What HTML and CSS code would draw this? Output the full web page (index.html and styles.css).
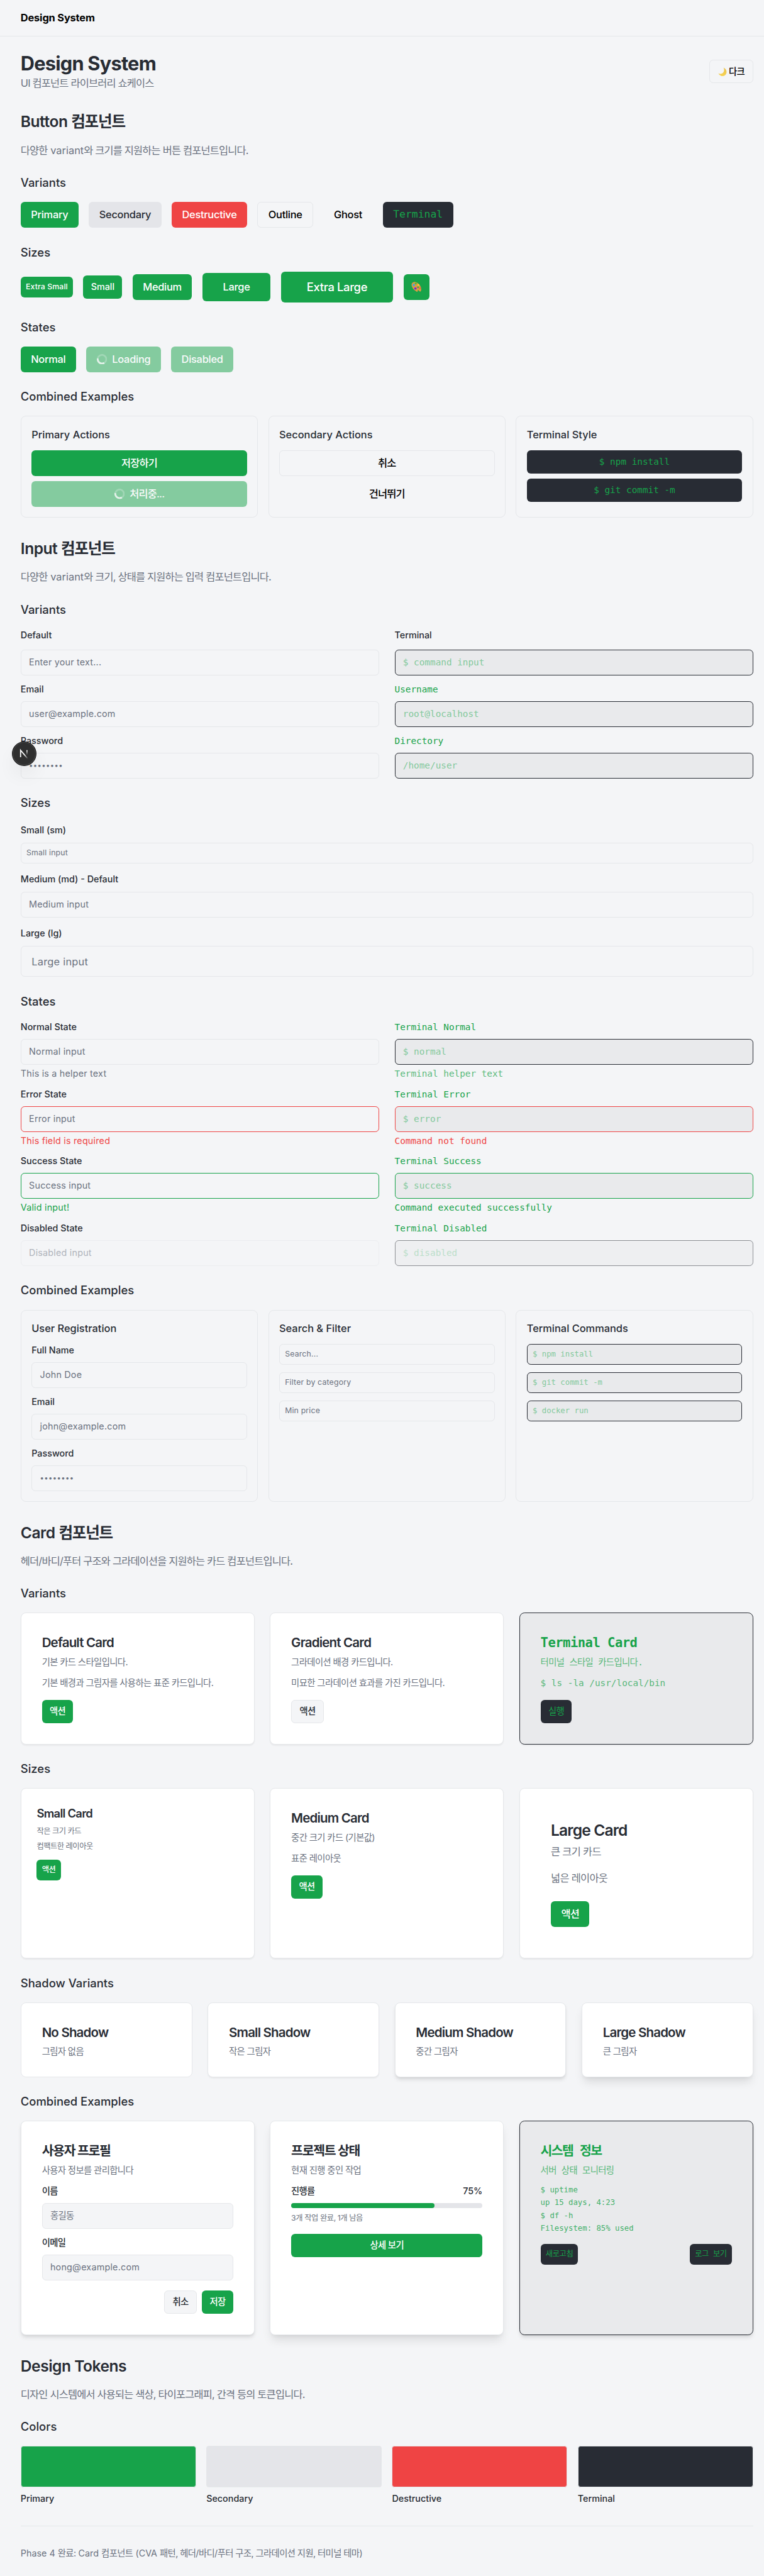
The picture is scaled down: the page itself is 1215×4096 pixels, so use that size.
FILE: index.html
```html
<!DOCTYPE html>
<html lang="ko">
<head>
<meta charset="utf-8">
<title>Design System</title>
<link rel="stylesheet" href="styles.css">
</head>
<body>
<svg width="0" height="0" class="defs" aria-hidden="true">
  <symbol id="spinner" viewBox="0 0 24 24">
    <g transform="rotate(-80 12 12)">
      <circle cx="12" cy="12" r="10" fill="none" stroke="currentColor" stroke-width="4" opacity=".25"/>
      <path fill="currentColor" opacity=".75" d="M4 12a8 8 0 018-8V0C5.373 0 0 5.373 0 12h4zm2 5.291A7.962 7.962 0 014 12H0c0 3.042 1.135 5.824 3 7.938l3-2.647z"/>
    </g>
  </symbol>
</svg>

<header class="topbar">Design System</header>

<main class="page">
  <div class="page-head">
    <div>
      <h1>Design System</h1>
      <p class="lead ko">UI 컴포넌트 라이브러리 쇼케이스</p>
    </div>
    <div class="btn sm outline theme">
      <svg width="14" height="14" viewBox="0 0 16 16"><defs><linearGradient id="moon" x1="0" y1="0" x2="0" y2="1"><stop offset="0" stop-color="#e9c14a"/><stop offset="1" stop-color="#f7d354"/></linearGradient></defs><path d="M9.6.6c4 1.500 6.200 5.600 5.200 9.600-1.100 4.200-5.400 6.300-9.400 5C3 14.400 1.300 12.700.6 10.700c2.800 1.500 6 1.200 8.100-.9C11 7.500 11.300 3.600 9.600.6z" fill="url(#moon)"/></svg>
      <span class="ko">다크</span>
    </div>
  </div>

  <section>
    <h2>Button <span class="ko">컴포넌트</span></h2>
    <p class="desc"><span class="ko">다양한</span> variant<span class="ko">와 크기를 지원하는 버튼 컴포넌트입니다.</span></p>

    <h3>Variants</h3>
    <div class="row">
      <div class="btn primary">Primary</div>
      <div class="btn secondary">Secondary</div>
      <div class="btn destructive">Destructive</div>
      <div class="btn outline">Outline</div>
      <div class="btn ghost">Ghost</div>
      <div class="btn terminal">Terminal</div>
    </div>

    <h3>Sizes</h3>
    <div class="row">
      <div class="btn xs primary">Extra Small</div>
      <div class="btn sm primary">Small</div>
      <div class="btn primary">Medium</div>
      <div class="btn lg primary">Large</div>
      <div class="btn xl primary">Extra Large</div>
      <div class="btn icon primary">
        <svg width="16" height="16" viewBox="0 0 32 32"><path fill="#d89a45" d="M8 1C13-1 22 4 27 11c4 6 5 12 3 18-1 3-4 1-6-1-2-3-4-3-4 0 0 3-1 4-4 2C9 27 1 18 1 9c0-4 3-7 7-8z"/><circle cx="21" cy="17" r="2.300" fill="#17a34a"/><ellipse cx="8" cy="10" rx="3" ry="3.800" fill="#35a7e8"/><ellipse cx="14" cy="5.500" rx="3.200" ry="2.800" fill="#45c626"/><ellipse cx="22.500" cy="10" rx="3" ry="2.600" fill="#f4cf2e"/><ellipse cx="27" cy="20" rx="2.400" ry="3" fill="#ee5a4e"/><ellipse cx="13" cy="21" rx="3.800" ry="3.300" fill="#7d22d3"/></svg>
      </div>
    </div>

    <h3>States</h3>
    <div class="row">
      <div class="btn primary">Normal</div>
      <div class="btn primary disabled"><svg class="spin"><use href="#spinner"/></svg>Loading</div>
      <div class="btn primary disabled">Disabled</div>
    </div>

    <h3>Combined Examples</h3>
    <div class="grid3 tight">
      <div class="panel">
        <h4>Primary Actions</h4>
        <div class="stack8">
          <div class="btn primary ko">저장하기</div>
          <div class="btn primary disabled ko"><svg class="spin"><use href="#spinner"/></svg>처리중...</div>
        </div>
      </div>
      <div class="panel">
        <h4>Secondary Actions</h4>
        <div class="stack8">
          <div class="btn outline ko">취소</div>
          <div class="btn ghost ko">건너뛰기</div>
        </div>
      </div>
      <div class="panel">
        <h4>Terminal Style</h4>
        <div class="stack8">
          <div class="btn sm terminal">$ npm install</div>
          <div class="btn sm terminal">$ git commit -m</div>
        </div>
      </div>
    </div>
  </section>

  <section>
    <h2>Input <span class="ko">컴포넌트</span></h2>
    <p class="desc"><span class="ko">다양한</span> variant<span class="ko">와 크기, 상태를 지원하는 입력 컴포넌트입니다.</span></p>

    <h3>Variants</h3>
    <div class="grid2">
      <div class="stack12">
        <div class="label">Default</div>
        <div class="input">Enter your text...</div>
        <div class="field"><div class="label">Email</div><div class="input">user@example.com</div></div>
        <div class="field anchor">
          <div class="label">Password</div><div class="input dots">••••••••</div>
          <div class="badge">
            <svg width="38" height="38" viewBox="0 0 38 38"><defs><linearGradient id="n1" gradientUnits="userSpaceOnUse" x1="20" y1="20.500" x2="24.800" y2="26.500"><stop stop-color="#fff"/><stop offset="1" stop-color="#fff" stop-opacity="0"/></linearGradient><linearGradient id="n2" gradientUnits="userSpaceOnUse" x1="23.400" y1="13.500" x2="23.400" y2="21"><stop stop-color="#fff"/><stop offset="1" stop-color="#fff" stop-opacity="0"/></linearGradient></defs><circle cx="19" cy="19" r="18.500" fill="#2f2f2f" stroke="#101010"/><circle cx="19" cy="19" r="17.500" fill="none" stroke="#494949"/><path d="M13.400 24.500v-11L24.600 26.800" fill="none" stroke="url(#n1)" stroke-width="1.700"/><path d="M23.300 13.500v7.500" stroke="url(#n2)" stroke-width="1.700"/></svg>
          </div>
        </div>
      </div>
      <div class="stack12">
        <div class="label">Terminal</div>
        <div class="input term">$ command input</div>
        <div class="field"><div class="label term">Username</div><div class="input term">root@localhost</div></div>
        <div class="field"><div class="label term">Directory</div><div class="input term">/home/user</div></div>
      </div>
    </div>

    <h3>Sizes</h3>
    <div class="stack12">
      <div class="field"><div class="inline-label"><span class="label">Small (sm)</span></div><div class="input sm">Small input</div></div>
      <div class="field"><div class="inline-label"><span class="label">Medium (md) - Default</span></div><div class="input">Medium input</div></div>
      <div class="field"><div class="inline-label"><span class="label">Large (lg)</span></div><div class="input lg">Large input</div></div>
    </div>

    <h3>States</h3>
    <div class="grid2">
      <div class="stack12">
        <div class="field"><div class="label">Normal State</div><div class="input">Normal input</div><div class="help">This is a helper text</div></div>
        <div class="field"><div class="label">Error State</div><div class="input error">Error input</div><div class="help red">This field is required</div></div>
        <div class="field"><div class="label">Success State</div><div class="input success">Success input</div><div class="help green">Valid input!</div></div>
        <div class="field"><div class="label">Disabled State</div><div class="input disabled">Disabled input</div></div>
      </div>
      <div class="stack12">
        <div class="field"><div class="label term">Terminal Normal</div><div class="input term">$ normal</div><div class="help term">Terminal helper text</div></div>
        <div class="field"><div class="label term">Terminal Error</div><div class="input term error">$ error</div><div class="help mono red">Command not found</div></div>
        <div class="field"><div class="label term">Terminal Success</div><div class="input term success">$ success</div><div class="help mono green">Command executed successfully</div></div>
        <div class="field"><div class="label term">Terminal Disabled</div><div class="input term disabled">$ disabled</div></div>
      </div>
    </div>

    <h3>Combined Examples</h3>
    <div class="grid3 tight">
      <div class="panel">
        <h4>User Registration</h4>
        <div class="stack12">
          <div class="field"><div class="label">Full Name</div><div class="input">John Doe</div></div>
          <div class="field"><div class="label">Email</div><div class="input">john@example.com</div></div>
          <div class="field"><div class="label">Password</div><div class="input dots">••••••••</div></div>
        </div>
      </div>
      <div class="panel">
        <h4>Search &amp; Filter</h4>
        <div class="stack12">
          <div class="input sm">Search...</div>
          <div class="input sm">Filter by category</div>
          <div class="input sm">Min price</div>
        </div>
      </div>
      <div class="panel">
        <h4>Terminal Commands</h4>
        <div class="stack12">
          <div class="input sm term">$ npm install</div>
          <div class="input sm term">$ git commit -m</div>
          <div class="input sm term">$ docker run</div>
        </div>
      </div>
    </div>
  </section>

  <section>
    <h2>Card <span class="ko">컴포넌트</span></h2>
    <p class="desc ko">헤더/바디/푸터 구조와 그라데이션을 지원하는 카드 컴포넌트입니다.</p>

    <h3>Variants</h3>
    <div class="grid3">
      <div class="card">
        <div class="card-title">Default Card</div>
        <div class="card-desc ko">기본 카드 스타일입니다.</div>
        <div class="card-body ko">기본 배경과 그림자를 사용하는 표준 카드입니다.</div>
        <div class="card-foot"><div class="btn sm primary ko">액션</div></div>
      </div>
      <div class="card">
        <div class="card-title">Gradient Card</div>
        <div class="card-desc ko">그라데이션 배경 카드입니다.</div>
        <div class="card-body ko">미묘한 그라데이션 효과를 가진 카드입니다.</div>
        <div class="card-foot"><div class="btn sm outline ink ko">액션</div></div>
      </div>
      <div class="card term">
        <div class="card-title">Terminal Card</div>
        <div class="card-desc ko">터미널 스타일 카드입니다.</div>
        <div class="card-body">$ ls -la /usr/local/bin</div>
        <div class="card-foot"><div class="btn sm terminal ko">실행</div></div>
      </div>
    </div>

    <h3>Sizes</h3>
    <div class="grid3">
      <div class="card small">
        <div class="card-title">Small Card</div>
        <div class="card-desc ko">작은 크기 카드</div>
        <div class="card-body ko">컴팩트한 레이아웃</div>
        <div class="card-foot"><div class="btn xs primary ko">액션</div></div>
      </div>
      <div class="card">
        <div class="card-title">Medium Card</div>
        <div class="card-desc ko">중간 크기 카드 (기본값)</div>
        <div class="card-body ko">표준 레이아웃</div>
        <div class="card-foot"><div class="btn sm primary ko">액션</div></div>
      </div>
      <div class="card large">
        <div class="card-title">Large Card</div>
        <div class="card-desc ko">큰 크기 카드</div>
        <div class="card-body ko">넓은 레이아웃</div>
        <div class="card-foot"><div class="btn primary ko">액션</div></div>
      </div>
    </div>

    <h3>Shadow Variants</h3>
    <div class="grid4 wide">
      <div class="card short flat"><div class="card-title">No Shadow</div><div class="card-desc ko">그림자 없음</div></div>
      <div class="card short"><div class="card-title">Small Shadow</div><div class="card-desc ko">작은 그림자</div></div>
      <div class="card short sh-md"><div class="card-title">Medium Shadow</div><div class="card-desc ko">중간 그림자</div></div>
      <div class="card short sh-lg"><div class="card-title">Large Shadow</div><div class="card-desc ko">큰 그림자</div></div>
    </div>

    <h3>Combined Examples</h3>
    <div class="grid3">
      <div class="card sh-md">
        <div class="card-title ko">사용자 프로필</div>
        <div class="card-desc ko">사용자 정보를 관리합니다</div>
        <div class="stack12 card-content">
          <div class="field"><div class="label ko">이름</div><div class="input ko">홍길동</div></div>
          <div class="field"><div class="label ko">이메일</div><div class="input">hong@example.com</div></div>
        </div>
        <div class="card-foot end"><div class="btn sm outline ink ko">취소</div><div class="btn sm primary ko">저장</div></div>
      </div>
      <div class="card sh-lg">
        <div class="card-title ko">프로젝트 상태</div>
        <div class="card-desc ko">현재 진행 중인 작업</div>
        <div class="card-content">
          <div class="progress-head"><span class="ko">진행률</span><span>75%</span></div>
          <div class="progress"><div class="progress-fill" style="width:75%"></div></div>
          <div class="note ko">3개 작업 완료, 1개 남음</div>
        </div>
        <div class="card-foot fill"><div class="btn sm primary ko">상세 보기</div></div>
      </div>
      <div class="card term sh-md">
        <div class="card-title ko">시스템 정보</div>
        <div class="card-desc ko">서버 상태 모니터링</div>
        <div class="card-content console">
          <div>$ uptime</div><div>up 15 days, 4:23</div><div>$ df -h</div><div>Filesystem: 85% used</div>
        </div>
        <div class="card-foot between"><div class="btn xs terminal ko">새로고침</div><div class="btn xs terminal ko">로그 보기</div></div>
      </div>
    </div>
  </section>

  <section>
    <h2>Design Tokens</h2>
    <p class="desc ko">디자인 시스템에서 사용되는 색상, 타이포그래피, 간격 등의 토큰입니다.</p>
    <h3>Colors</h3>
    <div class="grid4">
      <div class="token"><div class="swatch c-primary"></div><div class="label">Primary</div></div>
      <div class="token"><div class="swatch c-secondary"></div><div class="label">Secondary</div></div>
      <div class="token"><div class="swatch c-destructive"></div><div class="label">Destructive</div></div>
      <div class="token"><div class="swatch c-terminal"></div><div class="label">Terminal</div></div>
    </div>
  </section>

  <footer class="foot">Phase 4 <span class="ko">완료:</span> Card <span class="ko">컴포넌트</span> (CVA <span class="ko">패턴, 헤더/바디/푸터 구조, 그라데이션 지원, 터미널 테마)</span></footer>
</main>
</body>
</html>
```
FILE: styles.css
```css
:root {
  --bg: #f4f5f7;
  --fg: #282c34;
  --muted: #6b7280;
  --line: #e5e7ea;
  --green: #17a34a;
  --red: #ef4444;
  --gray: #e4e5e9;
  --sans: Inter, "Noto Sans CJK KR", sans-serif;
  --mono: "DejaVu Sans Mono", "Noto Sans CJK KR", monospace;
}

* { box-sizing: border-box; margin: 0; }
html { background: var(--bg); overflow: hidden; }
body {
  zoom: 1.0254;
  width: 1185px;
  background: var(--bg);
  color: var(--fg);
  font: 400 16px/24px var(--sans);
}
.defs { display: block; position: absolute; }

.topbar {
  height: 57px;
  padding: 16px 32px;
  border-bottom: 1px solid var(--line);
  color: #000;
  font-weight: 700;
  letter-spacing: -.01em;
}
.page { width: 1200px; padding: 24px 32px; }
.page-head { display: flex; justify-content: space-between; align-items: center; }
h1 { font-size: 30px; line-height: 36px; font-weight: 700; letter-spacing: -.025em; }
.lead, .desc { color: var(--muted); }
section { margin-top: 32px; }
h2 { font-size: 24px; line-height: 32px; font-weight: 600; letter-spacing: -.02em; }
.desc { margin-top: 16px; }
h3 { margin: 24px 0 16px; font-size: 18px; line-height: 28px; font-weight: 500; }
h4 { margin-bottom: 12px; font-size: 16px; line-height: 24px; font-weight: 500; }

/* layout */
.row { display: flex; align-items: center; gap: 16px; }
.grid2, .grid3, .grid4 { display: grid; gap: 24px; }
.grid2 { grid-template-columns: repeat(2, 1fr); }
.grid3 { grid-template-columns: repeat(3, 1fr); }
.grid4 { grid-template-columns: repeat(4, 1fr); gap: 16px; }
.grid3.tight { gap: 16px; }
.grid4.wide { gap: 24px; }
.stack8, .stack12 { display: flex; flex-direction: column; gap: 8px; }
.stack12 { gap: 12px; }

/* buttons */
.btn {
  display: flex;
  align-items: center;
  justify-content: center;
  gap: 8px;
  height: 40px;
  padding: 0 16px;
  border-radius: 6px;
  font-size: 16px;
  font-weight: 500;
  letter-spacing: -.016em;
  white-space: nowrap;
}
.btn.xs { height: 32px; padding: 0 8px; font-size: 12px; line-height: 16px; letter-spacing: .008em; }
.btn.sm { height: 36px; padding: 0 12px; font-size: 14px; line-height: 20px; letter-spacing: 0; }
.btn.lg { height: 44px; padding: 0 32px; }
.btn.xl { height: 48px; padding: 0 40px; font-size: 18px; letter-spacing: -.02em; }
.btn.icon { width: 40px; padding: 0; }
.primary { background: var(--green); color: #fff; }
.secondary { background: var(--gray); }
.destructive { background: var(--red); color: #fff; }
.outline { background: var(--bg); border: 1px solid var(--line); color: #000; }
.outline.ink { color: var(--fg); }
.ghost { color: #000; }
.btn.terminal { background: var(--fg); color: var(--green); font-family: var(--mono); font-weight: 400; letter-spacing: 0; }
.btn.disabled { opacity: .5; }
.theme { gap: 3px; width: 68px; }
.spin { width: 16px; height: 16px; }

.panel { padding: 16px; border: 1px solid var(--line); border-radius: 8px; }

/* inputs */
.label { font-size: 14px; line-height: 20px; font-weight: 500; }
.label.term { color: var(--green); font-family: var(--mono); font-weight: 400; }
.field .input { margin-top: 8px; }
.inline-label { height: 24px; }
.input {
  display: flex;
  align-items: center;
  height: 40px;
  padding: 0 12px;
  border: 1px solid var(--line);
  border-radius: 6px;
  background: var(--bg);
  color: var(--muted);
  font-size: 14px;
  line-height: 20px;
  letter-spacing: .014em;
}
.input.sm { height: 32px; padding: 0 8px; font-size: 12px; }
.input.lg { height: 48px; padding: 0 16px; font-size: 16px; }
.input.dots { font-size: 11px; letter-spacing: .035em; }
.input.term { border-color: var(--fg); background: #e9eaec; color: #84c99d; font-family: var(--mono); letter-spacing: 0; }
.input.error { border-color: var(--red); }
.input.success { border-color: var(--green); }
.input.disabled { opacity: .5; }
.help { margin-top: 4px; font-size: 14px; line-height: 20px; color: var(--muted); letter-spacing: .014em; }
.help.term, .help.mono { font-family: var(--mono); letter-spacing: 0; }
.help.term { color: var(--green); opacity: .7; }
.help.red { color: var(--red); }
.help.green { color: var(--green); }

.anchor { position: relative; }
.badge {
  position: absolute;
  left: -13px;
  top: 11px;
  width: 38px;
  height: 38px;
  border-radius: 50%;
  box-shadow: 0 16px 32px -8px rgba(0, 0, 0, .14);
}
.badge svg { display: block; }

/* cards */
.card {
  padding: 32px;
  border: 1px solid var(--line);
  border-radius: 8px;
  background: #fff;
  box-shadow: 0 1px 2px rgba(0, 0, 0, .05);
}
.card-title { font-size: 20px; line-height: 28px; font-weight: 600; letter-spacing: -.04em; }
.card-desc, .card-body { font-size: 14px; line-height: 20px; color: var(--muted); }
.card-desc { margin-top: 6px; }
.card-body, .card-content { margin-top: 12px; }
.card-foot { display: flex; gap: 8px; margin-top: 16px; }
.card-foot.end { justify-content: flex-end; }
.card-foot.between { justify-content: space-between; }
.card-foot.fill .btn { flex: 1; }
.card.small { padding: 24px; }
.card.small .card-title { font-size: 18px; }
.card.small .card-desc, .card.small .card-body { font-size: 12px; line-height: 16px; }
.card.small .card-body { margin-top: 8px; }
.card.small .card-foot { margin-top: 12px; }
.card.large { padding: 48px; }
.card.large .card-title { font-size: 24px; line-height: 32px; letter-spacing: -.035em; }
.card.large .card-desc, .card.large .card-body { font-size: 16px; line-height: 24px; }
.card.large .card-body { margin-top: 16px; }
.card.large .card-foot { margin-top: 24px; }
.card.short { height: 116px; }
.card.flat { box-shadow: none; }
.card.sh-md { box-shadow: 0 4px 6px -1px rgba(0, 0, 0, .1), 0 2px 4px -2px rgba(0, 0, 0, .1); }
.card.sh-lg { box-shadow: 0 10px 15px -3px rgba(0, 0, 0, .1), 0 4px 6px -4px rgba(0, 0, 0, .1); }
.card.term { border-color: var(--fg); background: #e9eaec; font-family: var(--mono); color: var(--green); }
.card.term .card-title { letter-spacing: -.025em; }
.card.term .card-desc, .card.term .card-body { color: var(--green); opacity: .7; }
.console { display: flex; flex-direction: column; gap: 4px; font-size: 12px; line-height: 16px; opacity: .8; }
.progress-head { display: flex; justify-content: space-between; font-size: 14px; line-height: 20px; font-weight: 500; }
.progress { height: 8px; margin-top: 8px; border-radius: 4px; background: var(--gray); }
.progress-fill { height: 8px; border-radius: 4px; background: var(--green); }
.note { margin-top: 8px; font-size: 12px; line-height: 16px; color: var(--muted); }

/* tokens */
.swatch { height: 64px; margin-bottom: 8px; border: 1px solid var(--line); border-radius: 4px; }
.c-primary { background: var(--green); }
.c-secondary { background: var(--gray); }
.c-destructive { background: var(--red); }
.c-terminal { background: var(--fg); }
.foot {
  margin-top: 32px;
  padding-top: 32px;
  border-top: 1px solid var(--line);
  font-size: 14px;
  line-height: 20px;
  color: var(--muted);
}

/* hangul tracking */
.ko, .btn.ko { letter-spacing: -.05em; }
.card-desc.ko, .card-body.ko, .input.ko, .label.ko, .btn.sm.ko, .foot .ko { letter-spacing: -.042em; }
.btn.xs.ko, .note.ko { letter-spacing: -.036em; }
.card-title.ko { letter-spacing: -.065em; }
.card.term .card-title.ko { letter-spacing: -.08em; }
```
